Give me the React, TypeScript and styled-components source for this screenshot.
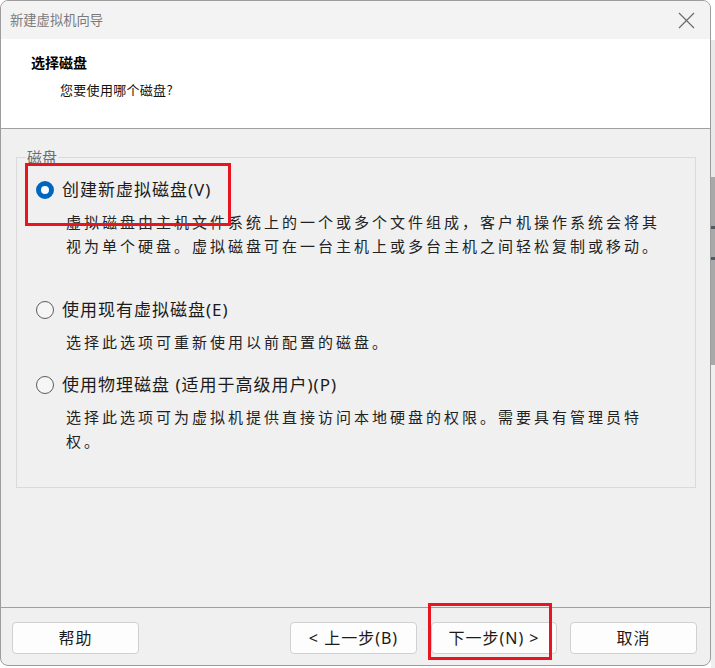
import React from "react";
import styled, { createGlobalStyle, css } from "styled-components";

const GlobalStyle = createGlobalStyle`
  *, *::before, *::after { box-sizing: border-box; }
  html, body { margin: 0; padding: 0; background: #ffffff; }
  body { font-family: "Noto Sans", "Noto Sans CJK SC", sans-serif; }
`;

const Page = styled.div`
  position: relative;
  display: flex;
  width: 715px;
  height: 668px;
  overflow: hidden;
  background: #ffffff;
`;

const Backdrop = styled.div`
  flex: 1;
  background: linear-gradient(
    to bottom,
    #ffffff 0px,
    #ffffff 40px,
    #e9e9e9 40px,
    #e9e9e9 177px,
    #a9a9a9 177px,
    #a9a9a9 226px,
    #505a66 226px,
    #505a66 229px,
    #a9a9a9 229px,
    #a9a9a9 257px,
    #505a66 257px,
    #505a66 260px,
    #a9a9a9 260px,
    #a9a9a9 365px,
    #efefef 365px
  );
`;

const Window = styled.div`
  width: 711px;
  height: 666px;
  flex-shrink: 0;
  display: flex;
  flex-direction: column;
  border: 1px solid #9c9c9c;
  border-radius: 8px;
  overflow: hidden;
  background: #f0f0f0;
`;

const TitleBar = styled.div`
  height: 38px;
  flex-shrink: 0;
  display: flex;
  align-items: center;
  justify-content: space-between;
  padding: 0 15px 0 9px;
  background: #f3f3f3;
`;

const TitleText = styled.span`
  font-family: "Noto Sans CJK SC", sans-serif;
  font-size: 13.3px;
  line-height: 18px;
  color: #7a7a7a;
`;

const CloseIcon = styled.svg`
  width: 17px;
  height: 17px;
  display: block;
`;

const Header = styled.div`
  height: 90px;
  flex-shrink: 0;
  background: #ffffff;
  border-bottom: 1px solid #a0a0a0;
  padding: 13px 0 0 30px;
`;

const HeaderTitle = styled.div`
  font-family: "Noto Sans CJK SC", sans-serif;
  font-size: 14px;
  font-weight: 700;
  line-height: 20px;
  color: #000000;
`;

const HeaderSub = styled.div`
  margin-top: 8px;
  padding-left: 29px;
  font-family: "Noto Sans CJK SC", sans-serif;
  font-size: 13px;
  letter-spacing: 0.3px;
  line-height: 20px;
  color: #111111;
`;

const Body = styled.div`
  flex: 1;
  padding: 28px 14px 0 15px;
`;

const GroupBox = styled.div`
  position: relative;
  height: 331px;
  border: 1px solid #dadada;
  padding: 20px 0 0 19px;
`;

const Legend = styled.span`
  position: absolute;
  top: -9px;
  left: 9px;
  padding: 0 1px;
  background: #f0f0f0;
  font-family: "Noto Sans CJK SC", sans-serif;
  font-size: 15px;
  line-height: 16px;
  color: #6d6d6d;
`;

const Option = styled.div<{ $gap: number }>`
  margin-top: ${(p) => p.$gap}px;
`;

const OptionRow = styled.label`
  display: flex;
  align-items: center;
  gap: 8px;
  height: 24px;
`;

const Radio = styled.span<{ $checked?: boolean }>`
  width: 18px;
  height: 18px;
  flex-shrink: 0;
  border-radius: 50%;
  ${(p) =>
    p.$checked
      ? css`
          border: 5px solid #0067c0;
          background: #ffffff;
        `
      : css`
          border: 1px solid #5c5c5c;
          background: #f6f6f6;
        `}
`;

const OptionLabel = styled.span`
  font-size: 17px;
  letter-spacing: 1px;
  line-height: 24px;
  color: #1b1b1b;
  white-space: nowrap;
`;

const Desc = styled.p`
  margin: 8px 0 0 0;
  padding-left: 30px;
  width: 630px;
  font-family: "Noto Sans CJK SC", sans-serif;
  font-size: 15px;
  letter-spacing: 3px;
  line-height: 24px;
  color: #222222;
`;

const Footer = styled.div`
  height: 58px;
  flex-shrink: 0;
  display: flex;
  align-items: flex-start;
  padding: 14px 13px 0 11px;
  border-top: 1px solid #a0a0a0;
`;

const Spacer = styled.div`
  flex: 1;
`;

const Button = styled.button<{ $w?: number; $ml?: number }>`
  width: ${(p) => p.$w ?? 127}px;
  height: 32px;
  margin-left: ${(p) => p.$ml ?? 0}px;
  padding: 0;
  border: 1px solid #d0d0d0;
  border-radius: 4px;
  background: #fdfdfd;
  font-family: "Noto Sans", "Noto Sans CJK SC", sans-serif;
  font-size: 16px;
  letter-spacing: 1px;
  color: #1a1a1a;
  line-height: 30px;
`;

const Annotation = styled.div<{ $x: number; $y: number; $w: number; $h: number }>`
  position: absolute;
  left: ${(p) => p.$x}px;
  top: ${(p) => p.$y}px;
  width: ${(p) => p.$w}px;
  height: ${(p) => p.$h}px;
  border: 3px solid #e8141f;
  pointer-events: none;
`;

export default function App() {
  return (
    <>
      <GlobalStyle />
      <Page>
        <Window>
          <TitleBar>
            <TitleText>新建虚拟机向导</TitleText>
            <CloseIcon viewBox="0 0 17 17">
              <path d="M1 1 L16 16 M16 1 L1 16" stroke="#6b6b6b" strokeWidth="1.2" fill="none" />
            </CloseIcon>
          </TitleBar>
          <Header>
            <HeaderTitle>选择磁盘</HeaderTitle>
            <HeaderSub>您要使用哪个磁盘?</HeaderSub>
          </Header>
          <Body>
            <GroupBox>
              <Legend>磁盘</Legend>
              <Option $gap={0}>
                <OptionRow>
                  <Radio $checked />
                  <OptionLabel>创建新虚拟磁盘(V)</OptionLabel>
                </OptionRow>
                <Desc>
                  虚拟磁盘由主机文件系统上的一个或多个文件组成，客户机操作系统会将其视为单个硬盘。虚拟磁盘可在一台主机上或多台主机之间轻松复制或移动。
                </Desc>
              </Option>
              <Option $gap={40}>
                <OptionRow>
                  <Radio />
                  <OptionLabel>使用现有虚拟磁盘(E)</OptionLabel>
                </OptionRow>
                <Desc>选择此选项可重新使用以前配置的磁盘。</Desc>
              </Option>
              <Option $gap={19}>
                <OptionRow>
                  <Radio />
                  <OptionLabel>使用物理磁盘 (适用于高级用户)(P)</OptionLabel>
                </OptionRow>
                <Desc>选择此选项可为虚拟机提供直接访问本地硬盘的权限。需要具有管理员特权。</Desc>
              </Option>
            </GroupBox>
          </Body>
          <Footer>
            <Button>帮助</Button>
            <Spacer />
            <Button>&lt; 上一步(B)</Button>
            <Button $w={126} $ml={14}>下一步(N) &gt;</Button>
            <Button $ml={13}>取消</Button>
          </Footer>
        </Window>
        <Backdrop />
        <Annotation $x={25} $y={163} $w={206} $h={63} />
        <Annotation $x={428} $y={603} $w={124} $h={57} />
      </Page>
    </>
  );
}
